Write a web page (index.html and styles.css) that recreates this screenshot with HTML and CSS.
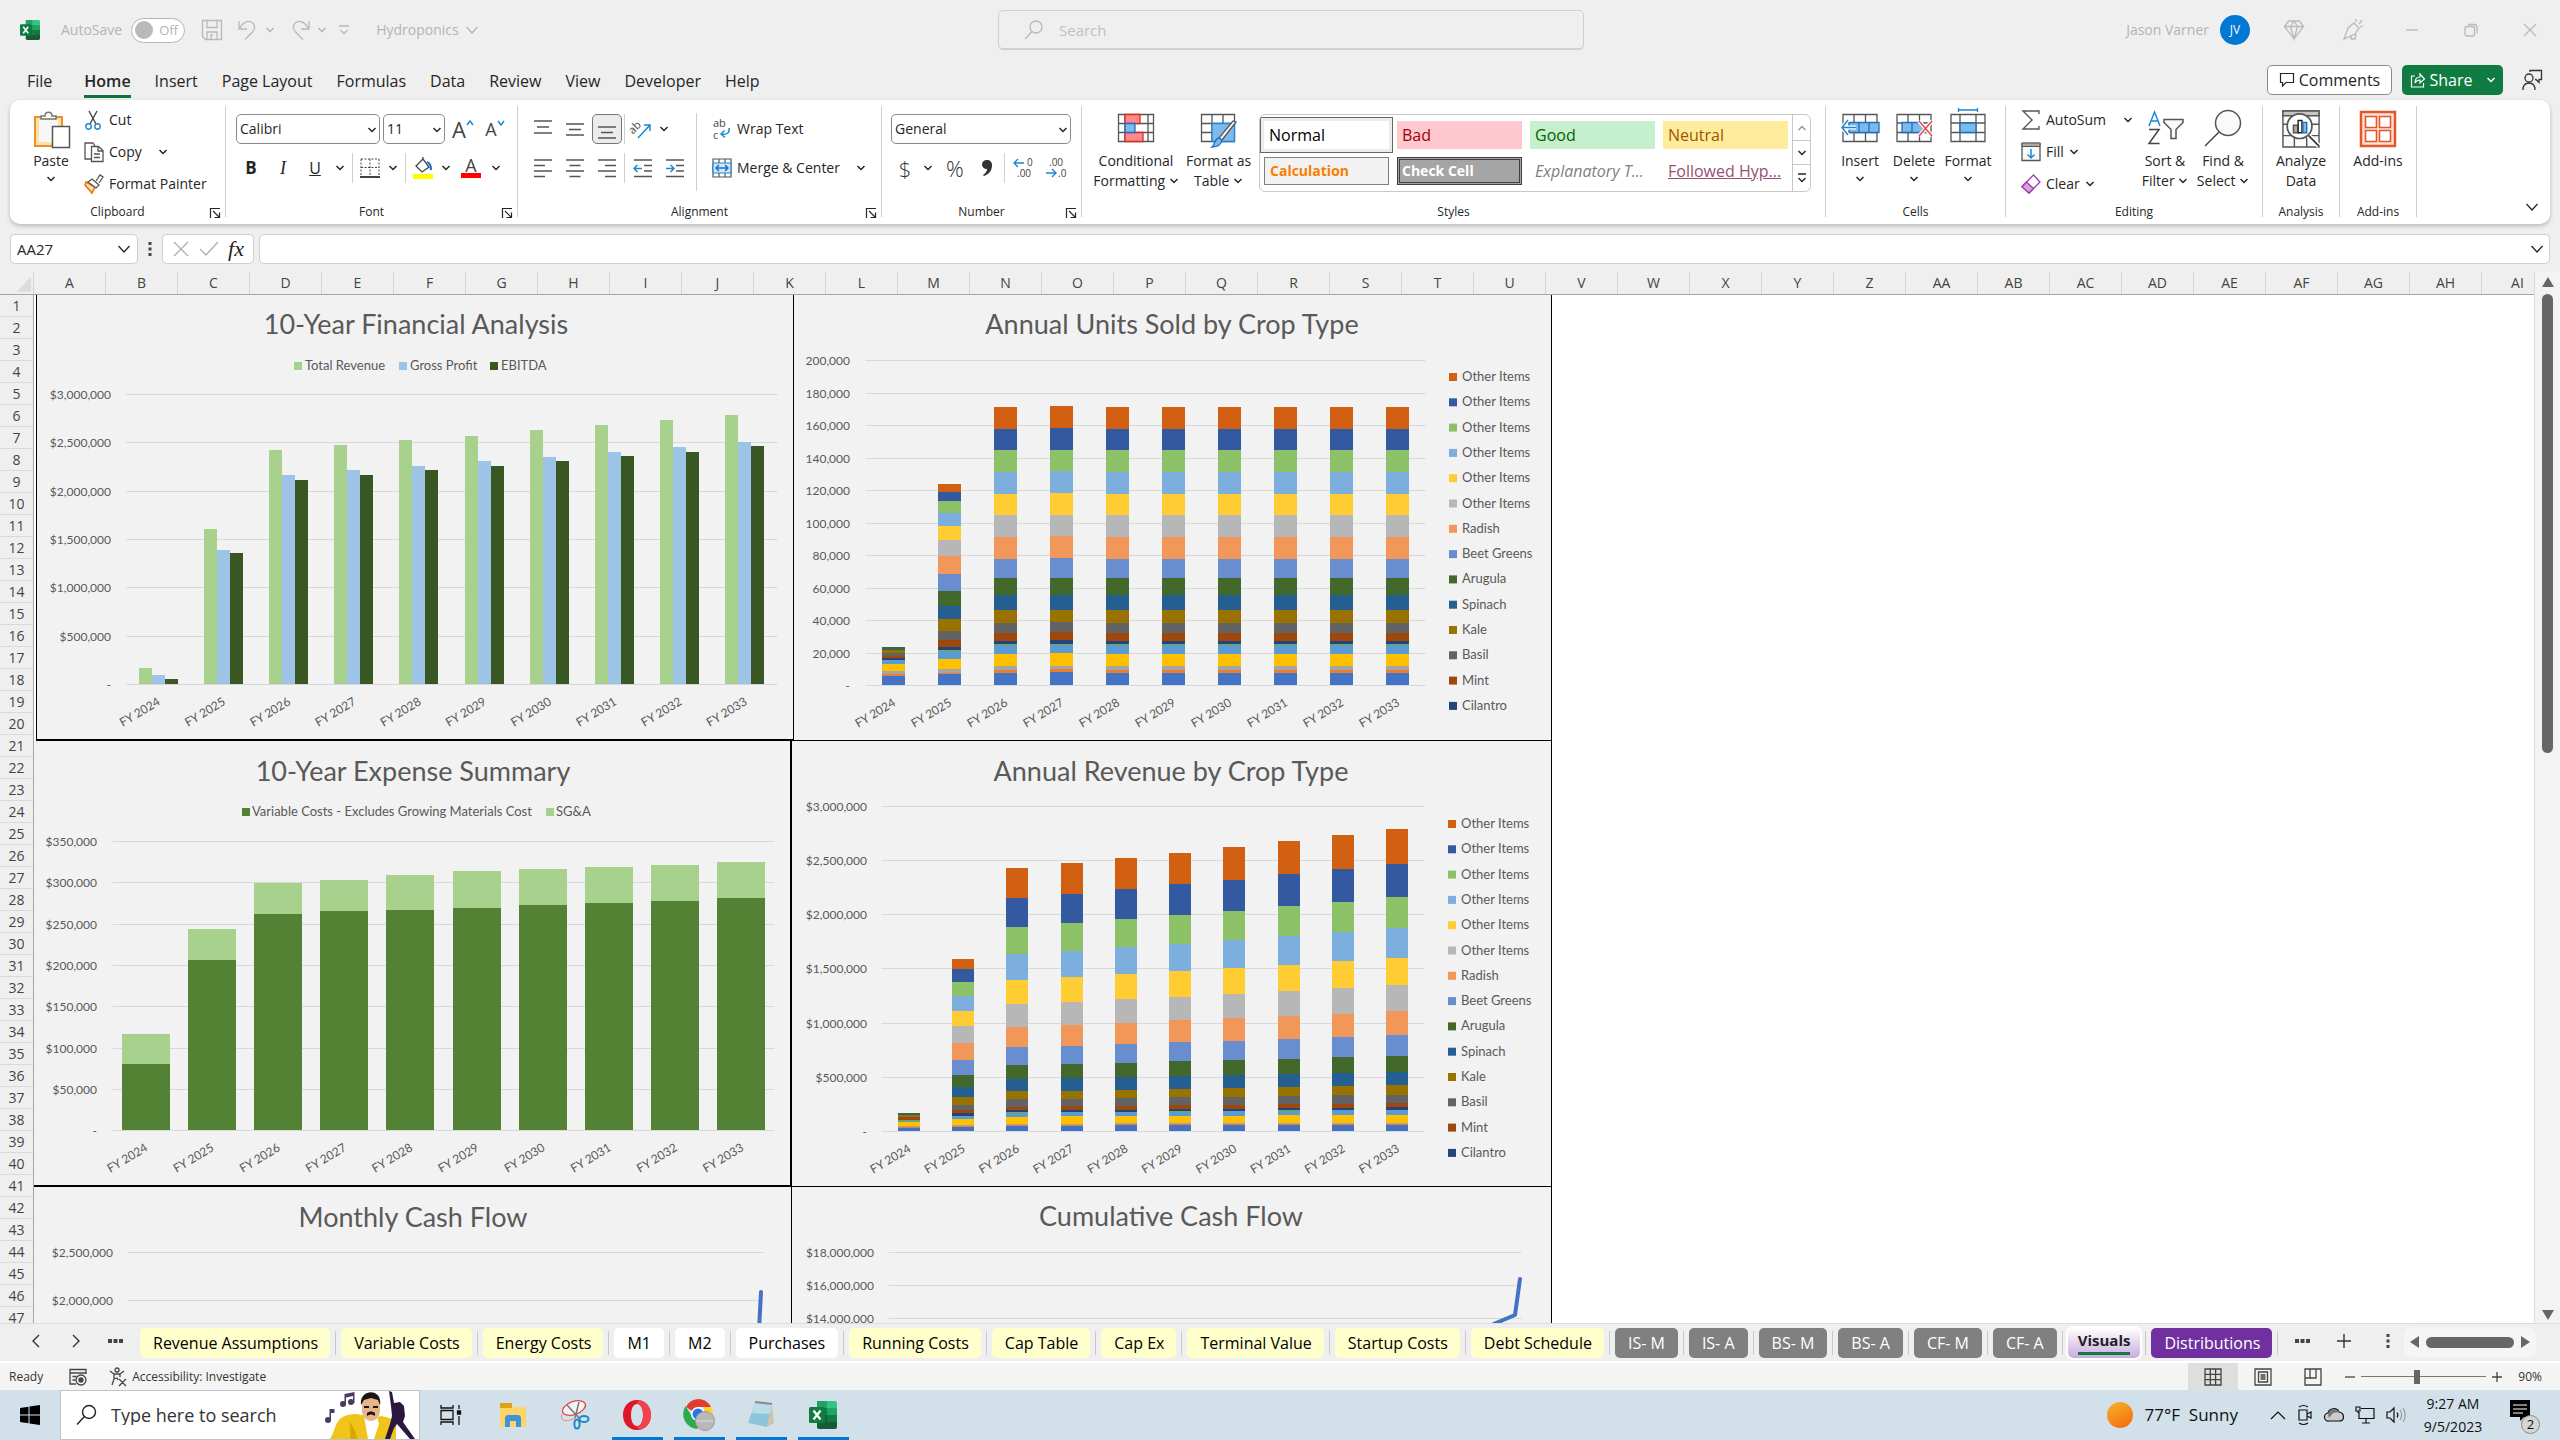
FILE: index.html
```html
<!DOCTYPE html>
<html lang="en">
<head>
<meta charset="utf-8">
<title>Hydroponics - Excel</title>
<link rel="stylesheet" href="styles.css">
</head>
<body>
<svg class="defs" aria-hidden="true">
  <symbol id="chev" viewBox="0 0 10 10"><path d="M1.5 3l3.5 3.5L8.500 3" fill="none" stroke="currentColor" stroke-width="1.500"/></symbol>
  <symbol id="chev-lg" viewBox="0 0 14 14"><path d="M1.500 4l5.500 6 5.500-6" fill="none" stroke="currentColor" stroke-width="1.300"/></symbol>
  <symbol id="launch" viewBox="0 0 12 12"><path d="M1.500 11V1.500H11M4 4l6 6M10.500 5.500v5h-5" fill="none" stroke="currentColor" stroke-width="1.200"/></symbol>
  <symbol id="excel" viewBox="0 0 28 28"><path d="M8 0h10v7H8z" fill="#21a366"/><path d="M18 0h8a2 2 0 0 1 2 2v5H18z" fill="#33c481"/><path d="M8 7h10v7H8z" fill="#107c41"/><path d="M18 7h10v7H18z" fill="#21a366"/><path d="M8 14h10v7H8z" fill="#185c37"/><path d="M18 14h10v7H18z" fill="#107c41"/><path d="M8 21h20v5a2 2 0 0 1-2 2H10a2 2 0 0 1-2-2z" fill="#185c37"/><rect y="6" width="16" height="16" rx="1.500" fill="#107c41"/><path d="M4.500 9.500l7 9M11.500 9.500l-7 9" stroke="#fff" stroke-width="2.200"/></symbol>
</svg>

<header class="titlebar">
  <svg class="app-icon" viewBox="0 0 28 28"><use href="#excel"/></svg>
  <label class="autosave">AutoSave <span class="toggle"><input type="checkbox" aria-label="AutoSave"><span>Off</span></span></label>
  <div class="quick">
    <button aria-label="Save"><svg width="22" height="22" viewBox="0 0 22 22"><path d="M1.500 1.500h19v19h-16l-3-3zM6 1.500v7h10v-7M6 20v-7h10v7M10 20v-4h2" /></svg></button>
    <button aria-label="Undo"><svg width="22" height="22" viewBox="0 0 22 22"><path d="M2 2v8h8M2.500 9.500C6 3 11 1 15 3.500c4 3 3 7 0 10L8 20.500"/></svg><svg class="c10"><use href="#chev"/></svg></button>
    <button aria-label="Redo"><svg width="22" height="22" viewBox="0 0 22 22"><path d="M20 2v8h-8M19.500 9.500C16 3 11 1 7 3.500c-4 3-3 7 0 10l7 7"/></svg><svg class="c10"><use href="#chev"/></svg></button>
    <button aria-label="Customize"><svg width="12" height="12" viewBox="0 0 12 12"><path d="M1 2h10M2.500 6L6 9.500 9.500 6"/></svg></button>
  </div>
  <button class="docname">Hydroponics <svg class="c14"><use href="#chev-lg"/></svg></button>
  <div class="search-slot">
    <label class="search"><svg width="22" height="22" viewBox="0 0 22 22"><circle cx="13" cy="8" r="6"/><path d="M9 12.500L2 20"/></svg><input type="search" placeholder="Search" aria-label="Search"></label>
  </div>
  <div class="account">
    <span>Jason Varner</span><span class="avatar">JV</span>
    <button aria-label="Premium"><svg width="22" height="22" viewBox="0 0 22 22"><path d="M5.500 2h11l4 5.500L11 20 1.500 7.500zM1.500 7.500h19M7.500 7.500L11 2l3.500 5.500L11 20z"/></svg></button>
    <button aria-label="Draw"><svg width="22" height="22" viewBox="0 0 22 22"><path d="M2 20L6 9l6-5 5 5-4 6-11 5zM9 17v3h4l1-5M14 3V0M17 5l3-4M18 8l3-1"/></svg></button>
    <button aria-label="Minimize"><svg width="14" height="14" viewBox="0 0 14 14"><path d="M1 7h12"/></svg></button>
    <button aria-label="Restore"><svg width="14" height="14" viewBox="0 0 14 14"><rect x="1" y="3.500" width="9.500" height="9.500" rx="2"/><path d="M4 1.500h6a3 3 0 0 1 3 3v6"/></svg></button>
    <button aria-label="Close"><svg width="14" height="14" viewBox="0 0 14 14"><path d="M1 1l12 12M13 1L1 13"/></svg></button>
  </div>
</header>

<nav class="menubar">
  <a href="#file">File</a><a href="#home" class="current">Home</a><a href="#insert">Insert</a><a href="#layout">Page Layout</a><a href="#formulas">Formulas</a><a href="#data">Data</a><a href="#review">Review</a><a href="#view">View</a><a href="#developer">Developer</a><a href="#help">Help</a>
  <div class="menu-actions">
    <button class="comments"><svg width="16" height="16" viewBox="0 0 16 16"><path d="M1.500 1.500h13v9H7L3.500 14v-3.500h-2z" fill="none" stroke="currentColor" stroke-width="1.200"/></svg>Comments</button>
    <button class="share"><svg width="16" height="16" viewBox="0 0 16 16"><path d="M5 4H1.500v11h12v-4M5 11c0-4 2-6 5-6V2l4.500 5L10 11V8c-2.500 0-4 1-5 3z" fill="none" stroke="currentColor" stroke-width="1.200"/></svg>Share<svg class="c10"><use href="#chev"/></svg></button>
    <button class="plain" aria-label="Catch up"><svg width="22" height="22" viewBox="0 0 22 22" fill="none" stroke="#333" stroke-width="1.300"><circle cx="8" cy="9" r="4"/><path d="M2 21c0-5 2-7 6-7s6 2 6 7M9 3V1.500h11.500v9H18v3l-3-3h-1"/></svg></button>
  </div>
</nav>

<section class="ribbon">
  <div class="group g-clip">
    <div class="body">
      <button class="big paste"><svg width="38" height="38" viewBox="0 0 38 38" fill="none" stroke-width="1.500"><path d="M3 7h27v29H3z" fill="#fce1a6" stroke="#e8912d" stroke-width="2"/><path d="M7 10h19v22H7z" fill="#f6f6f6"/><path d="M9 9V6h4c0-5 7-5 7 0h4v3z" fill="#fafafa" stroke="#777"/><path d="M20.500 16.500h17v21h-17z" fill="#fff" stroke="#555"/></svg>Paste<svg class="c10"><use href="#chev"/></svg></button>
      <div class="stack">
        <button><svg width="20" height="20" viewBox="0 0 20 20" fill="none" stroke-width="1.400"><path d="M5 1l7 13M13 1L6 14" stroke="#444"/><circle cx="4.500" cy="16.500" r="2.700" stroke="#1e88d2"/><circle cx="13.500" cy="16.500" r="2.700" stroke="#1e88d2"/></svg>Cut</button>
        <button><svg width="20" height="20" viewBox="0 0 20 20" fill="none" stroke="#555" stroke-width="1.300"><path d="M7 17H1V1h8l2 3"/><path d="M7.500 4.500h7l4.500 4v11H7.500zM14 5v4h4.500M10 12h6M10 15.500h6" fill="#fff"/></svg>Copy<svg class="c10 wide"><use href="#chev"/></svg></button>
        <button><svg width="20" height="20" viewBox="0 0 20 20" fill="none" stroke-width="1.300"><path d="M2 8l9 5-3 6-7-8z" fill="#fdd9a8" stroke="#e07b1a" stroke-width="1.600"/><path d="M8 5l7 6-3 3-8-6zM12 7l4-6 3 2-4 6" fill="#fff" stroke="#555"/></svg>Format Painter</button>
      </div>
    </div>
    <div class="foot"><span>Clipboard</span><button aria-label="Clipboard options"><svg class="c12"><use href="#launch"/></svg></button></div>
  </div>
  <i class="sep"></i>
  <div class="group g-font">
    <div class="rows">
      <div class="line">
        <span class="combo w-font"><select aria-label="Font"><option>Calibri</option></select><svg class="c10"><use href="#chev"/></svg></span>
        <span class="combo w-size"><select aria-label="Size"><option>11</option></select><svg class="c10"><use href="#chev"/></svg></span>
        <button class="w36 letter" aria-label="Grow font">A<svg class="sup" viewBox="0 0 8 8"><path d="M1 6l3-4 3 4" fill="none" stroke="#1e88d2" stroke-width="1.500"/></svg></button>
        <button class="w28 letter small" aria-label="Shrink font">A<svg class="sup" viewBox="0 0 8 8"><path d="M1 2l3 4 3-4" fill="none" stroke="#1e88d2" stroke-width="1.500"/></svg></button>
      </div>
      <div class="line">
        <button class="w32"><b>B</b></button><button class="w32"><i class="serif">I</i></button><button class="w32"><u>U</u></button><button class="w18" aria-label="Underline styles"><svg class="c10"><use href="#chev"/></svg></button>
        <i class="vs"></i>
        <button class="w28" aria-label="Borders"><svg width="20" height="20" viewBox="0 0 20 20" fill="none" stroke="#444"><path d="M1 1h18M1 1v17M19 1v17M10 1v17M1 9.500h18" stroke-dasharray="2 1.500"/><path d="M0 19h20" stroke-width="2"/></svg></button><button class="w18" aria-label="Border styles"><svg class="c10"><use href="#chev"/></svg></button>
        <i class="vs"></i>
        <button class="w28" aria-label="Fill colour"><svg width="20" height="22" viewBox="0 0 20 22"><path d="M3 9l7-7 6 8-7 5zM10 2V0" fill="#fff" stroke="#444" stroke-width="1.300"/><path d="M14 5c3 1 4 3 4 8" fill="none" stroke="#1e6fbf" stroke-width="2"/><path d="M0 17h20v5H0z" fill="#ff0"/></svg></button><button class="w18" aria-label="Fill colours"><svg class="c10"><use href="#chev"/></svg></button>
        <button class="w32 fcolor" aria-label="Font colour">A</button><button class="w18" aria-label="Font colours"><svg class="c10"><use href="#chev"/></svg></button>
      </div>
    </div>
    <div class="foot"><span>Font</span><button aria-label="Font options"><svg class="c12"><use href="#launch"/></svg></button></div>
  </div>
  <i class="sep"></i>
  <div class="group g-align">
    <div class="body">
      <div class="rows">
        <div class="line">
          <button class="w32" aria-label="Top align"><svg class="ln" viewBox="0 0 18 22"><path d="M0 3h18M3 9h12M0 15h18"/></svg></button>
          <button class="w32" aria-label="Middle align"><svg class="ln" viewBox="0 0 18 22"><path d="M0 6h18M3 11.500h12M0 17h18"/></svg></button>
          <button class="w32 on" aria-label="Bottom align"><svg class="ln" viewBox="0 0 18 22"><path d="M0 9h18M3 14.500h12M0 20h18"/></svg></button>
          <i class="vs"></i>
          <button class="w28" aria-label="Orientation"><svg width="22" height="22" viewBox="0 0 22 22"><text x="0" y="12" class="ab" transform="rotate(-45 7 11)">ab</text><path d="M8 20L20 7M14 7h6v6" fill="none" stroke="#1e88d2" stroke-width="1.500"/></svg></button><button class="w18" aria-label="Orientations"><svg class="c10"><use href="#chev"/></svg></button>
        </div>
        <div class="line">
          <button class="w32" aria-label="Left"><svg class="ln" viewBox="0 0 18 22"><path d="M0 3h18M0 8.500h11M0 14h18M0 19.500h11"/></svg></button>
          <button class="w32" aria-label="Centre"><svg class="ln" viewBox="0 0 18 22"><path d="M0 3h18M3.500 8.500h11M0 14h18M3.500 19.500h11"/></svg></button>
          <button class="w32" aria-label="Right"><svg class="ln" viewBox="0 0 18 22"><path d="M0 3h18M7 8.500h11M0 14h18M7 19.500h11"/></svg></button>
          <i class="vs"></i>
          <button class="w32" aria-label="Outdent"><svg class="ln" viewBox="0 0 18 22"><path d="M0 3h18M10 8.500h8M10 14h8M0 19.500h18"/><path class="bl" d="M8 11.500H0M3.500 8L0 11.500 3.500 15"/></svg></button>
          <button class="w32" aria-label="Indent"><svg class="ln" viewBox="0 0 18 22"><path d="M0 3h18M10 8.500h8M10 14h8M0 19.500h18"/><path class="bl" d="M0 11.500h8M4.500 8L8 11.500 4.500 15"/></svg></button>
        </div>
      </div>
      <i class="vs tall"></i>
      <div class="rows">
        <button class="line txt"><svg width="20" height="22" viewBox="0 0 20 22"><text x="1" y="9" class="ab">ab</text><text x="1" y="21" class="ab">c</text><path d="M17 10c1 5-2 7-8 6M12.500 12.500L9 16l4 3.500" fill="none" stroke="#1e88d2" stroke-width="1.500"/></svg>Wrap Text</button>
        <button class="line txt"><svg width="20" height="20" viewBox="0 0 20 20" fill="none" stroke="#555" stroke-width="1.200"><path d="M1 1h18v18H1zM7 1v4M13 1v4M7 15v4M13 15v4"/><path d="M1 5h18v10H1z" fill="#cfe6f8" stroke="#1e88d2"/><path d="M4 10h12M7 7l-3 3 3 3M13 7l3 3-3 3" stroke="#1e6fbf" stroke-width="1.500"/></svg>Merge &amp; Center<svg class="c10 wide"><use href="#chev"/></svg></button>
      </div>
    </div>
    <div class="foot"><span>Alignment</span><button aria-label="Alignment options"><svg class="c12"><use href="#launch"/></svg></button></div>
  </div>
  <i class="sep"></i>
  <div class="group g-num">
    <div class="rows">
      <div class="line"><span class="combo w-num"><select aria-label="Number format"><option>General</option></select><svg class="c10"><use href="#chev"/></svg></span></div>
      <div class="line">
        <button class="w28 sym">$</button><button class="w18" aria-label="Currencies"><svg class="c10"><use href="#chev"/></svg></button><button class="w36 sym">%</button><button class="w28" aria-label="Comma"><svg width="10" height="20" viewBox="0 0 10 20"><path d="M5 2c3 0 5 2 5 5 0 6-3 9-8 11l-1-1c3-2 4-4 4-6-3 0-5-2-5-4.500S2 2 5 2z" fill="#333"/></svg></button>
        <i class="vs"></i>
        <button class="w32" aria-label="Increase decimal"><svg width="22" height="22" viewBox="0 0 22 22"><text x="14" y="9" class="dec">0</text><text x="4" y="20" class="dec">.00</text><path d="M11 6H1M5 2L1 6l4 4" fill="none" stroke="#1e88d2" stroke-width="1.400"/></svg></button>
        <button class="w32" aria-label="Decrease decimal"><svg width="22" height="22" viewBox="0 0 22 22"><text x="4" y="9" class="dec">.00</text><text x="13" y="20" class="dec">.0</text><path d="M1 16h10M7 12l4 4-4 4" fill="none" stroke="#1e88d2" stroke-width="1.400"/></svg></button>
      </div>
    </div>
    <div class="foot"><span>Number</span><button aria-label="Number options"><svg class="c12"><use href="#launch"/></svg></button></div>
  </div>
  <i class="sep"></i>
  <div class="group g-styles">
    <div class="body">
      <button class="big w84"><svg width="38" height="38" viewBox="0 0 38 38" fill="none" stroke="#555" stroke-width="1.300"><path d="M1.500 4.500h35v27h-35zM1.500 13.500h35M1.500 22.500h35M8 4.500v27M31 4.500v27"/><path d="M8 4.500h15v9H8zM8 22.500h18v9H8z" fill="#ff8a8a" stroke="#d92b2b"/><path d="M8 13.500h10v9H8z" fill="#7fb9ea" stroke="#1e6fbf"/></svg><span>Conditional</span><span>Formatting <svg class="c10"><use href="#chev"/></svg></span></button>
      <button class="big w81"><svg width="38" height="38" viewBox="0 0 38 38" fill="none" stroke="#555" stroke-width="1.300"><path d="M1.500 4.500h33v27h-33zM1.500 13.500h33M1.500 22.500h33M12 4.500v27M23 4.500v27"/><path d="M12 13.500h22.500v18H12z" fill="#7fb9ea" stroke="#1e88d2"/><path d="M36 12L22 30l-3-2 14-17z" fill="#fff"/><path d="M22 30c-1 6-5 7-10 7 3-2 2-8 7-9z" fill="#7fb9ea" stroke="#1e6fbf"/></svg><span>Format as</span><span>Table <svg class="c10"><use href="#chev"/></svg></span></button>
      <div class="gallery">
        <div class="cells">
          <button class="st-normal">Normal</button><button class="st-bad">Bad</button><button class="st-good">Good</button><button class="st-neutral">Neutral</button>
          <button class="st-calc">Calculation</button><button class="st-check">Check Cell</button><button class="st-expl">Explanatory T...</button><button class="st-link">Followed Hyp...</button>
        </div>
        <div class="gscroll">
          <button class="dim" aria-label="Up"><svg class="c10 flip"><use href="#chev"/></svg></button><button aria-label="Down"><svg class="c10"><use href="#chev"/></svg></button><button aria-label="More"><svg width="10" height="10" viewBox="0 0 10 10"><path d="M1 1h8M1.500 5L5 8.500 8.500 5" fill="none" stroke="currentColor" stroke-width="1.400"/></svg></button>
        </div>
      </div>
    </div>
    <div class="foot"><span>Styles</span></div>
  </div>
  <i class="sep"></i>
  <div class="group g-cells">
    <div class="body">
      <button class="big w54"><svg width="38" height="38" viewBox="0 0 38 38" fill="none" stroke="#555" stroke-width="1.300"><path d="M2 4.500h34v27H2zM2 13h34M2 22.500h34M13 4.500v27M24.500 4.500v27"/><path d="M8 12.500h30v10H8z" fill="#7fb9ea" stroke="#1e6fbf"/><path d="M18 12.500v10M28 12.500v10" stroke="#1e6fbf"/><path d="M15 17.500H1M7 10L1 17.500 7 25" stroke="#fff" stroke-width="4"/><path d="M15 17.500H1M7 10L1 17.500 7 25" stroke="#1e88d2" stroke-width="1.500"/></svg>Insert<svg class="c10"><use href="#chev"/></svg></button>
      <button class="big w54"><svg width="38" height="38" viewBox="0 0 38 38" fill="none" stroke="#555" stroke-width="1.300"><path d="M2 4.500h34v27H2zM2 13h34M2 22.500h34M13 4.500v27M24.500 4.500v27"/><path d="M7 12.500h19l3 5-3 5H7z" fill="#7fb9ea" stroke="#1e6fbf"/><path d="M17 12.500v10" stroke="#1e6fbf"/><path d="M24 11l13 15M37 11L24 26" stroke="#fff" stroke-width="4"/><path d="M24 11l13 15M37 11L24 26" stroke="#e8484a" stroke-width="1.500"/></svg>Delete<svg class="c10"><use href="#chev"/></svg></button>
      <button class="big w54"><svg width="38" height="38" viewBox="0 0 38 38" fill="none" stroke="#555" stroke-width="1.300"><path d="M2 4.500h34v27H2zM2 13h34M2 22.500h34M11 4.500v27M27 4.500v27"/><path d="M11 13h16v9.500H11z" fill="#7fb9ea" stroke="#1e6fbf"/><path d="M9.500 0h19M9.500-2v4M28.500-2v4" stroke="#1e88d2"/></svg>Format<svg class="c10"><use href="#chev"/></svg></button>
    </div>
    <div class="foot"><span>Cells</span></div>
  </div>
  <i class="sep"></i>
  <div class="group g-edit">
    <div class="body">
      <div class="stack">
        <button><svg width="20" height="20" viewBox="0 0 20 20"><path d="M18 4V1H2l9 9-9 9h16v-3" fill="none" stroke="#555" stroke-width="1.400"/></svg>AutoSum<svg class="c10 wide"><use href="#chev"/></svg></button>
        <button><svg width="20" height="20" viewBox="0 0 20 20" fill="none"><path d="M1 1.500h18v17H1z" fill="#fafafa" stroke="#555" stroke-width="1.300"/><path d="M1 1h18v3.500H1z" fill="#aaa" stroke="#555"/><path d="M10 7v9M6.500 12.500L10 16l3.500-3.500" stroke="#1e88d2" stroke-width="1.500"/></svg>Fill<svg class="c10"><use href="#chev"/></svg></button>
        <button><svg width="20" height="20" viewBox="0 0 20 20" stroke="#9a3fa8" stroke-width="1.300"><path d="M12.500 1l6.500 7-11 11-7-6.500z" fill="#fff"/><path d="M5.500 8l7 6.500L8 19l-7-6z" fill="#d9a0e0"/></svg>Clear<svg class="c10"><use href="#chev"/></svg></button>
      </div>
      <button class="big w60"><svg width="38" height="38" viewBox="0 0 38 38"><path d="M3 16L8.500 2 14 16M5 11h7" fill="none" stroke="#1e88d2" stroke-width="1.500"/><path d="M3 19.500h10L3 33.500h10.500" fill="none" stroke="#444" stroke-width="1.500"/><path d="M18 9.500h19v3l-7 7v9h-5v-9l-7-7z" fill="#fafafa" stroke="#555" stroke-width="1.500"/></svg><span>Sort &amp;</span><span>Filter <svg class="c10"><use href="#chev"/></svg></span></button>
      <button class="big w60"><svg width="38" height="38" viewBox="0 0 38 38"><circle cx="24" cy="13" r="12.500" fill="#fafafa" stroke="#555" stroke-width="1.500"/><path d="M15 22L1 36" stroke="#444" stroke-width="1.500"/></svg><span>Find &amp;</span><span>Select <svg class="c10"><use href="#chev"/></svg></span></button>
    </div>
    <div class="foot"><span>Editing</span></div>
  </div>
  <i class="sep"></i>
  <div class="group g-one">
    <div class="body">
      <button class="big w76"><svg width="40" height="40" viewBox="0 0 40 40" fill="none" stroke="#555" stroke-width="1.500"><path d="M1 1h38v38H1zM1 15h38M1 27h38M13 27v12M26 27v12" fill="#fafafa"/><path d="M1 1h38v5H1z" fill="#c4c4c4"/><circle cx="18.500" cy="17" r="13" fill="#fff" stroke-width="1.800"/><path d="M12 16h5v8h-5z" fill="#aaa"/><path d="M17 11h4v13h-4z" fill="#fff" stroke="#222"/><path d="M22 13h4v11h-4z" fill="#7fb9ea" stroke="#1e6fbf"/><path d="M28 27l11 11" stroke="#fff" stroke-width="5"/><path d="M28 27l11 11" stroke="#333" stroke-width="1.800"/></svg><span>Analyze</span><span>Data</span></button>
    </div>
    <div class="foot"><span>Analysis</span></div>
  </div>
  <i class="sep"></i>
  <div class="group g-one">
    <div class="body">
      <button class="big w76"><svg width="38" height="38" viewBox="0 0 38 38" fill="#fff" stroke="#e5572a" stroke-width="1.600"><path d="M2 2h34v34H2z" fill="#fbe3da" stroke-width="2.500"/><path d="M6.500 6.500h11v11h-11zM20.500 6.500h11v11h-11zM6.500 20.500h11v11h-11zM20.500 20.500h11v11h-11z"/></svg><span>Add-ins</span></button>
    </div>
    <div class="foot"><span>Add-ins</span></div>
  </div>
  <i class="sep"></i>
  <button class="collapse" aria-label="Collapse ribbon"><svg class="c14"><use href="#chev-lg"/></svg></button>
</section>

<section class="formula">
  <div class="namebox"><input type="text" value="AA27" aria-label="Name box"><svg class="c14"><use href="#chev-lg"/></svg></div>
  <svg width="4" height="14" viewBox="0 0 4 14"><path d="M.5 0h3v3h-3zM.5 5.500h3v3h-3zM.5 11h3v3h-3z" fill="#444"/></svg>
  <div class="fx"><button aria-label="Cancel"><svg width="18" height="18" viewBox="0 0 18 18"><path d="M2 2l14 14M16 2L2 16"/></svg></button><button aria-label="Enter"><svg width="20" height="18" viewBox="0 0 20 18"><path d="M1 9l6 6L19 2"/></svg></button><button class="fn">fx</button></div>
  <div class="fbox"><input type="text" aria-label="Formula bar"><svg class="c14"><use href="#chev-lg"/></svg></div>
</section>

<main class="sheet">
  <div class="grid">
    <div class="colheads" id="cols"><span class="corner"></span></div>
    <div class="area">
      <div class="rowheads" id="rows"></div>
      <div class="canvas">
        <div class="charts">
          <figure class="c1" id="chart-financial"></figure>
          <figure class="c2" id="chart-units"></figure>
          <figure class="c3" id="chart-expense"></figure>
          <figure class="c4" id="chart-revenue"></figure>
          <figure class="c5" id="chart-monthly"></figure>
          <figure class="c6" id="chart-cumulative"></figure>
        </div>
      </div>
    </div>
  </div>
  <div class="vscroll"><svg width="12" height="10" viewBox="0 0 12 10"><path d="M6 0l6 10H0z" fill="#666"/></svg><span class="vthumb"></span><svg width="12" height="10" viewBox="0 0 12 10"><path d="M0 0h12L6 10z" fill="#666"/></svg></div>
</main>

<nav class="sheetbar">
  <div class="arrows"><button aria-label="Previous"><svg width="8" height="14" viewBox="0 0 8 14"><path d="M7 1L1 7l6 6"/></svg></button><button aria-label="Next"><svg width="8" height="14" viewBox="0 0 8 14"><path d="M1 1l6 6-6 6"/></svg></button><button aria-label="More sheets"><svg width="16" height="6" viewBox="0 0 16 6"><path class="dot" d="M1 1h4v4H1zM6.500 1h4v4h-4zM12 1h4v4h-4z"/></svg></button></div>
  <ul class="tabs" id="tabs"></ul>
  <div class="tabtools"><button aria-label="More tabs"><svg width="16" height="6" viewBox="0 0 16 6"><path class="dot" d="M1 1h4v4H1zM6.500 1h4v4h-4zM12 1h4v4h-4z"/></svg></button><button aria-label="New sheet"><svg width="16" height="16" viewBox="0 0 16 16"><path d="M8 1v14M1 8h14"/></svg></button><svg width="4" height="14" viewBox="0 0 4 14"><path class="dot" d="M.5 0h3v3h-3zM.5 5.500h3v3h-3zM.5 11h3v3h-3z"/></svg></div>
  <div class="hscroll"><svg width="9" height="12" viewBox="0 0 9 12"><path d="M9 0v12L0 6z" fill="#666"/></svg><span></span><svg width="9" height="12" viewBox="0 0 9 12"><path d="M0 0v12l9-6z" fill="#666"/></svg></div>
</nav>

<footer class="status">
  <span>Ready</span>
  <svg width="18" height="18" viewBox="0 0 18 18" fill="none" stroke="#444" stroke-width="1.300"><path d="M7 16H1V1.500h16V6M1 5h16M3.500 8.500h4M3.500 12h3"/><circle cx="12" cy="12" r="5"/><circle cx="12" cy="12" r="2" fill="#444"/></svg>
  <button class="access"><svg width="18" height="20" viewBox="0 0 18 20" fill="none" stroke="#444" stroke-width="1.300"><circle cx="8" cy="3" r="2"/><path d="M1 4l4 3v5l-2 6M15 4l-4 3v3M5 7h6M5 12l3-1 1 2M10 12l7 7M17 12l-7 7"/></svg>Accessibility: Investigate</button>
  <div class="views">
    <button class="on" aria-label="Normal"><svg width="18" height="18" viewBox="0 0 18 18"><path d="M1 1h16v16H1zM1 6.300h16M1 11.600h16M6.300 1v16M11.600 1v16"/></svg></button>
    <button aria-label="Page layout"><svg width="18" height="18" viewBox="0 0 18 18"><path d="M1 1h16v16H1zM4.500 4h9v10h-9zM6.500 7h5M6.500 9h5M6.500 11h5"/></svg></button>
    <button aria-label="Page break"><svg width="18" height="18" viewBox="0 0 18 18"><path d="M1 1h16v16H1zM1 10h11V1M6 1v9"/></svg></button>
  </div>
  <div class="zoom"><button aria-label="Zoom out"><svg width="10" height="10" viewBox="0 0 10 10"><path d="M0 5h10"/></svg></button><input type="range" min="0" max="100" value="44" aria-label="Zoom"><button aria-label="Zoom in"><svg width="10" height="10" viewBox="0 0 10 10"><path d="M0 5h10M5 0v10"/></svg></button></div>
  <span class="pct">90%</span>
</footer>

<footer class="taskbar">
  <button class="start" aria-label="Start"><svg width="20" height="20" viewBox="0 0 20 20"><path d="M0 3l8.500-1.200V9.500H0zM9.500 1.600L20 0v9.500H9.500zM0 10.500h8.500v7.700L0 17zM9.500 10.500H20V20L9.500 18.400z"/></svg></button>
  <label class="tsearch"><svg width="22" height="22" viewBox="0 0 22 22"><circle cx="14" cy="8" r="6.500"/><path d="M9.500 12.500L2 20.500"/></svg><input type="search" placeholder="Type here to search" aria-label="Type here to search">
    <svg class="singer" width="94" height="48" viewBox="0 0 94 48" stroke="none"><g fill="#4a3c5e"><circle cx="3" cy="29" r="3"/><path d="M4.500 18h5v4H6v8H4.500z"/><circle cx="18" cy="13" r="3"/><circle cx="26" cy="11" r="3"/><path d="M19.500 3l10-2v11H28V5l-7 1.500V13h-1.500z"/></g><path d="M5 48c4-6 5-16 11-21 6-4 15-5 21-3l8 5 11-4c6 1 12 3 15 6v17z" fill="#f0c419"/><path d="M39 25h13l2 8-5 15h-6z" fill="#fff"/><path d="M24 30c4 5 8 12 8 18h-7c1-7 0-12-1-18z" fill="#d9a800"/><path d="M37 10c0-8 18-8 18 0v10c0 6-5 10-9 10s-9-4-9-10z" fill="#e8b48a"/><path d="M36 14C34-3 58-3 55 14l-2-5-7-2-7 2z" fill="#1b1516"/><path d="M42 22c3-2 5-2 8 0v3c-3-2-5-2-8 0zM39 15h5v2h-5zM48 15h5v2h-5z" fill="#1b1516"/><path d="M64 0l3 1 2 11 6-1 4 4 1 10-2 6 12 17h-5l-13-15-3 4-4 11h-5l5-15 2-8-1-10z" fill="#2b1740"/></svg></label>
  <ul class="apps">
    <li><button aria-label="Task view"><svg width="22" height="20" viewBox="0 0 22 20" fill="none" stroke="#111" stroke-width="1.300"><path d="M1 0v3h12V0M1 20v-3h12v3M1 5.500h12v9H1zM19 0v4M19 11v9"/><path d="M17.500 6h3v3h-3z" fill="#111"/></svg></button></li>
    <li><button aria-label="Explorer"><svg width="28" height="26" viewBox="0 0 28 26"><path d="M1 2h11l3 3h12v20H1z" fill="#ffd763"/><path d="M1 1h12v5H1z" fill="#e0a315"/><path d="M1 6h26v18H1z" fill="#fdd465"/><path d="M6 25V15l2-2h12l2 2v10h-5v-6h-6v6z" fill="#3f95dd"/></svg></button></li>
    <li><button aria-label="Snip"><svg width="30" height="30" viewBox="0 0 30 30" fill="none"><ellipse cx="14" cy="8" rx="12" ry="6.500" transform="rotate(-20 14 8)" fill="#f4f4f4" stroke="#e0474a" stroke-width="1.300"/><path d="M2 14c-3 8 6 8 13 4" stroke="#e88" stroke-width="1"/><path d="M7 5l12 13M19 2l-4 16" stroke="#777" stroke-width="1.500"/><ellipse cx="17" cy="24" rx="2.600" ry="4.500" stroke="#1e88d2" stroke-width="2"/><ellipse cx="24" cy="19" rx="4.500" ry="3" stroke="#1e88d2" stroke-width="2"/></svg></button></li>
    <li class="run"><button aria-label="Opera"><svg width="30" height="30" viewBox="0 0 30 30"><path fill-rule="evenodd" d="M15 0c9 0 14 7 14 15s-5 15-14 15S1 23 1 15 6 0 15 0zm0 4c-4 0-6 5-6 11s2 11 6 11 6-5 6-11-2-11-6-11z" fill="#e01626"/><path d="M20 1c6 3 9 8 9 14s-3 11-9 14c-2 1-5 0-5-3 4 0 6-5 6-11S19 4 15 4c0-3 3-4 5-3z" fill="#f2434c"/></svg></button></li>
    <li class="run"><button aria-label="Chrome"><svg width="32" height="32" viewBox="0 0 32 32"><path d="M15 0a15 15 0 0 1 13 8H15l-6 4-6-4A15 15 0 0 1 15 0z" fill="#e33b2e"/><path d="M2.500 7A15 15 0 0 0 14 30l6-10-10-1z" fill="#2da94f"/><path d="M28 8a15 15 0 0 1-14 22l7-12V8z" fill="#fdd231"/><circle cx="15" cy="15" r="7" fill="#fff"/><circle cx="15" cy="15" r="5.500" fill="#2676ea"/><circle cx="22" cy="22" r="9.500" fill="#b9b9b9" stroke="#999"/><path d="M13 22h18" stroke="#ddd"/></svg></button></li>
    <li class="run"><button aria-label="Notepad"><svg width="28" height="28" viewBox="0 0 28 28"><path d="M8 2l17 2-5 22-19-4z" fill="#8cc5da"/><path d="M8 2l17 2-2 9-18-1z" fill="#b9dde8"/><path d="M25 4l2 18-7 4z" fill="#cfc4a8"/><path d="M8 1l17 2" stroke="#888" stroke-width="2"/></svg></button></li>
    <li class="run"><button aria-label="Excel"><svg width="28" height="28" viewBox="0 0 28 28"><use href="#excel"/></svg></button></li>
  </ul>
  <div class="tray">
    <button class="weather"><span class="sun"></span>77°F&nbsp; Sunny</button>
    <button aria-label="Hidden icons"><svg width="16" height="10" viewBox="0 0 16 10"><path d="M1 9l7-7 7 7"/></svg></button>
    <button aria-label="Meet"><svg width="16" height="20" viewBox="0 0 16 20"><path d="M2 5h8v10H2zM10 9l4-2v6l-4-2M2 2c3-2 6-2 9 0M2 18c3 2 6 2 9 0"/></svg></button>
    <button aria-label="OneDrive"><svg width="20" height="14" viewBox="0 0 20 14"><path d="M5 13a4 4 0 0 1-1-8c1-5 9-6 11-1 6 1 6 9 0 9z" fill="#ccc"/><path d="M4 6c2-6 9-6 11-2l-6 1-4 5z" fill="#777" stroke="none"/></svg></button>
    <button aria-label="Network"><svg width="20" height="18" viewBox="0 0 20 18"><path d="M6 2.500h13v10H4V6M11 12.500V17M7 17h8M1 1h4v4H1zM3 5v2"/></svg></button>
    <button aria-label="Volume"><svg width="20" height="16" viewBox="0 0 20 16"><path d="M1 5h3l4-4v14l-4-4H1zM11 5.500c1 1.500 1 3.500 0 5"/><path d="M14 3c2 3 2 7 0 10M17 1c3 4 3 10 0 14" stroke="#999"/></svg></button>
    <div class="clock"><span>9:27 AM</span><span>9/5/2023</span></div>
    <button class="notif" aria-label="Notifications"><svg width="20" height="22" viewBox="0 0 20 22"><path d="M0 0h20v17h-6l-4 4v-4H0z" fill="#000" stroke="none"/><path d="M3 5h14M3 9h14M3 13h10" stroke="#fff"/></svg><span>2</span></button>
  </div>
</footer>
<script src="app.js"></script>
</body>
</html>
```
FILE: styles.css
```css
* { box-sizing: border-box; }
html, body { height: 100%; }
body { margin: 0; display: flex; flex-direction: column; background: #efefef; color: #262626; font: 14px/20px "Open Sans", "Noto Sans", sans-serif; overflow: hidden; }
button, input, select { font: inherit; color: inherit; background: none; border: 0; padding: 0; margin: 0; outline: none; }
button { display: flex; align-items: center; justify-content: center; white-space: nowrap; }
ul { list-style: none; margin: 0; padding: 0; }
a { color: inherit; text-decoration: none; }
svg { flex: none; overflow: visible; }
.defs { display: none; }
.c10 { width: 10px; height: 10px; }
.c12 { width: 12px; height: 12px; }
.c14 { width: 14px; height: 14px; }

/* title bar */
.titlebar { flex: none; height: 60px; display: flex; align-items: center; padding: 0 19px 0 20px; color: #b4b4b4; position: relative; }
.titlebar svg { fill: none; stroke: #b9b9b9; stroke-width: 1.3; }
.titlebar .app-icon { width: 20px; height: 20px; stroke: none; }
.autosave { display: flex; align-items: center; gap: 9px; margin-left: 21px; }
.toggle { display: flex; align-items: center; width: 54px; height: 25px; border: 1px solid #b4b4b4; border-radius: 13px; background: #fff; padding-left: 3px; gap: 6px; font-size: 13px; }
.toggle input { appearance: none; width: 18px; height: 18px; border-radius: 9px; background: #b9b9b9; }
.quick { display: flex; align-items: center; gap: 14px; margin-left: 16px; }
.quick button { gap: 6px; }
.quick button:last-child { margin-left: -3px; }
.docname { margin-left: 26px; gap: 6px; }
.search-slot { position: absolute; left: 0; right: 0; display: flex; justify-content: center; pointer-events: none; padding-left: 22px; }
.search { width: 586px; height: 40px; border: 1px solid #d0d0d0; border-bottom-width: 2px; border-radius: 5px; display: flex; align-items: center; gap: 14px; padding-left: 24px; font-size: 15px; }
.search input::placeholder { color: #c0c0c0; opacity: 1; }
.account { margin-left: auto; display: flex; align-items: center; }
.avatar { width: 30px; height: 30px; border-radius: 15px; background: #0078d4; color: #fff; font-size: 12px; line-height: 30px; text-align: center; margin-left: 11px; }
.account button { width: 22px; margin-left: 37px; }
.account .avatar + button { margin-left: 33px; }

/* ribbon tabs */
.menubar { flex: none; height: 40px; display: flex; align-items: center; padding: 0 17px 0 27px; gap: 24px; font-size: 16px; }
.menubar a { height: 36px; line-height: 39px; }
.menubar a:first-child { margin-right: 8px; }
.menubar .current { font-weight: 600; border-bottom: 3px solid #0f7040; }
.menu-actions { margin-left: auto; display: flex; align-items: center; gap: 10px; }
.comments, .share { height: 30px; border-radius: 5px; gap: 4px; }
.comments { width: 125px; border: 1px solid #8a8a8a; background: #fff; }
.share { width: 101px; background: #107c41; color: #fff; }
.share .c10 { margin-left: 9px; }
.plain { margin-left: 8px; }

/* ribbon */
.ribbon { flex: none; height: 124px; margin: 0 10px; background: #fff; border-radius: 10px; box-shadow: 0 2px 4px #0000003a; display: flex; }
.sep { width: 1px; background: #cfcfcf; margin: 6px 0 7px; flex: none; }
.group { display: flex; flex-direction: column; padding-top: 4px; }
.group .body { display: flex; height: 100px; }
.foot { height: 16px; line-height: 16px; font-size: 12px; display: flex; align-items: center; }
.foot span { flex: 1; text-align: center; }
.foot button { width: 12px; margin: 2px 4px 0 -16px; }
.g-clip { width: 215px; } .g-font { width: 291px; } .g-align { width: 363px; } .g-num { width: 199px; }
.g-styles { width: 743px; } .g-cells { width: 179px; } .g-edit { width: 256px; } .g-one { width: 76px; }
.big { flex-direction: column; justify-content: flex-start; padding-top: 6px; }
.big > svg:first-child { height: 38px; margin-bottom: 3px; }
.paste { width: 66px; margin-left: 8px; }
.w84 { width: 84px; margin-left: 12px; } .w81 { width: 81px; } .w54 { width: 54px; } .w60 { width: 58px; } .w76 { width: 76px; }
.big > .c10 { margin-top: 3px; }
.stack { display: flex; flex-direction: column; }
.stack button { height: 32px; justify-content: flex-start; gap: 5px; }
.stack .wide { margin-left: 11px; }
.rows { display: flex; flex-direction: column; height: 100px; padding-top: 10px; }
.line { height: 30px; display: flex; align-items: center; }
.line + .line { margin-top: 9px; }
.g-font .rows, .g-align .rows:first-child { padding-left: 9px; }
.g-num .rows { padding-left: 9px; }
.combo { position: relative; height: 30px; border: 1px solid #8a8a8a; border-radius: 5px; display: flex; }
.combo select { appearance: none; flex: 1; padding-left: 3px; }
.combo svg { position: absolute; right: 2px; top: 10px; }
.w-font { width: 144px; margin: 0 3px 0 1px; } .w-size { width: 62px; } .w-num { width: 180px; }
.w18 { width: 18px; } .w28 { width: 28px; } .w32 { width: 32px; } .w36 { width: 36px; }
.line button { height: 30px; }
.line b { font-size: 17px; } .line u { font-size: 16px; } .serif { font: italic 18px/20px "Liberation Serif", serif; }
.letter { font-size: 22px; color: #444; } .letter.small { font-size: 18px; }
.sup { width: 8px; height: 8px; align-self: flex-start; margin-top: 5px; }
.vs { width: 1px; height: 30px; background: #cfcfcf; margin: 0 3px; flex: none; }
.fcolor { font-size: 18px; position: relative; padding-bottom: 6px; color: #444; }
.fcolor::after { content: ""; position: absolute; left: 6px; bottom: 5px; width: 20px; height: 5px; background: red; }
.ln { width: 18px; height: 22px; fill: none; stroke: #555; stroke-width: 1.5; }
.ln .bl { stroke: #1e88d2; }
.on { background: #ececec; }
.line .on { border: 1px solid #777; border-radius: 5px; width: 30px; margin: 0 1px; }
.g-align .vs { margin: 0 2px 0 1px; }
.g-align .tall { height: 78px; margin: 9px 15px 0 5px; }
.line.txt { gap: 5px; justify-content: flex-start; }
.txt .wide { margin-left: 11px; }
.ab { font: 11px "Open Sans", sans-serif; fill: #444; }
.dec { font: 10px "Open Sans", sans-serif; fill: #444; }
.sym { font-size: 22px; font-weight: 300; color: #333; }
.gallery { height: 78px; margin-top: 10px; width: 552px; border: 1px solid #c8c8c8; border-radius: 6px; display: flex; overflow: hidden; }
.cells { flex: 1; display: grid; grid-template-columns: repeat(4, 125px); grid-auto-rows: 28px; gap: 8px; padding: 6px 4px; font-size: 16px; }
.cells button { justify-content: flex-start; padding-left: 5px; }
.st-normal { color: #000; outline: 1px solid #666; outline-offset: 3px; box-shadow: 0 0 0 3px #ececec; }
.st-bad { background: #ffc7ce; color: #9c0006; } .st-good { background: #c6efce; color: #006100; } .st-neutral { background: #ffeb9c; color: #9c5700; }
.cells .st-calc { background: #f2f2f2; color: #fa7d00; font-weight: 700; border: 1px solid #7f7f7f; font-size: 14px; }
.cells .st-check { background: #a5a5a5; color: #fff; font-weight: 700; border: 3px double #3f3f3f; font-size: 14px; padding-left: 2px; }
.st-expl { color: #7f7f7f; font-style: italic; } .cells .st-link { color: #954f72; text-decoration: underline; }
.gscroll { width: 18px; display: grid; grid-template-rows: 25px 24px 1fr; border-left: 1px solid #c8c8c8; }
.gscroll button + button { border-top: 1px solid #c8c8c8; }
.dim { color: #999; } .flip { transform: rotate(180deg); }
.g-cells .body { padding-left: 7px; }
.g-edit .stack { margin-left: 15px; width: 115px; }
.g-edit .stack .wide { margin-left: 12px; }
.collapse { margin: auto 11px 10px auto; }

/* formula bar */
.formula { flex: none; margin: 10px 10px 8px; height: 30px; display: flex; align-items: center; gap: 5px; }
.formula > svg { margin: 0 5px; }
.formula > div { height: 30px; background: #fff; border: 1px solid #cfcfcf; border-radius: 5px; display: flex; align-items: center; }
.namebox { width: 128px; padding: 0 6px; font-size: 15px; }
.namebox input { width: 100px; }
.fx { width: 92px; justify-content: space-evenly; }
.fx svg { fill: none; stroke: #b0b0b0; stroke-width: 1.4; }
.fn { font: italic 22px/22px "Liberation Serif", serif; color: #222; }
.fbox { flex: 1; padding: 0 5px 0 10px; }
.fbox input { flex: 1; }

/* worksheet */
.sheet { flex: 1; min-height: 0; display: flex; background: #fff; }
.grid { flex: 1; min-width: 0; display: flex; flex-direction: column; border-right: 1px solid #dcdcdc; }
.colheads { flex: none; height: 23px; display: flex; background: #efefef; border-bottom: 1px solid #a6a6a6; overflow: hidden; color: #444; font-size: 14px; line-height: 21px; }
.colheads span { flex: none; width: 72px; text-align: center; border-right: 1px solid #d4d4d4; }
.colheads .corner { width: 34px; position: relative; background: linear-gradient(to bottom right, transparent 55%, #dcdcdc 55%) 15px 3px / 16px 17px no-repeat; }
.area { flex: 1; min-height: 0; display: flex; overflow: hidden; }
.rowheads { flex: none; width: 34px; background: #efefef; border-right: 1px solid #a6a6a6; color: #444; font-size: 14px; line-height: 22px; text-align: center; }
.rowheads span { display: block; height: 22px; border-bottom: 1px solid #d9d9d9; }
.canvas { flex: 1; min-width: 0; overflow: hidden; }
.charts { width: 1518px; display: grid; grid-template-columns: 758px 760px; grid-template-rows: 446px 446px 200px; }
figure { margin: 0; background: #f2f2f2; border: 0 solid #000; }
figure svg { display: block; overflow: hidden; }
.c1 { border-width: 0 0 2px 1px; margin: 0 -1px 0 2px; }
.c2 { border-width: 0 1px 1px; margin-left: 1px; }
.c3 { border-width: 0 2px 2px 0; }
.c4 { border-width: 0 1px 1px 0; }
.c5 { border-width: 0 1px 0 0; } .c6 { border-width: 0 1px 0 0; }
.chart-title { font: 27px Lato, sans-serif; fill: #595959; text-anchor: middle; }
.chart-label { font: 12px Lato, sans-serif; fill: #595959; }
.chart-label.key { font-size: 13px; }
.chart-label.end { text-anchor: end; }
.gridline { stroke: #d9d9d9; stroke-width: 1; }
.trend { fill: none; stroke: #4472c4; stroke-width: 4; stroke-linecap: round; stroke-linejoin: round; }
.vscroll { width: 25px; background: #f3f3f3; display: flex; flex-direction: column; align-items: center; padding: 5px 0 3px; }
.vthumb { width: 11px; height: 459px; border-radius: 6px; background: #666; margin: 7px 0 auto; }

/* sheet tabs */
.sheetbar { flex: none; height: 40px; border-top: 1px solid #dcdcdc; border-bottom: 2px solid #fff; display: flex; align-items: flex-start; padding: 0 24px 0 32px; font-size: 16px; color: #000; }
.sheetbar svg { fill: none; stroke: #333; stroke-width: 1.4; }
.sheetbar .dot { fill: #444; stroke: none; }
.arrows { display: flex; align-items: center; gap: 32px; height: 34px; }
.arrows button:last-child { margin-left: -5px; }
.tabs { display: flex; margin-left: 17px; }
.tabs li { display: flex; padding-top: 4px; }
.tabs li::after { content: ""; width: 1px; height: 24px; background: #c8c8c8; margin: 3px 5px 0; }
.tabs button { height: 30px; border-radius: 5px; padding: 0 12px 0 13px; }
.t-y { background: #ffffcc; } .t-w { background: #fff; } .t-g { background: #808080; color: #fff; } .t-p { background: #7030a0; color: #fff; }
.tabs .t-g, .tabs .t-w { padding: 0 13px; }
.t-a { background: linear-gradient(#fff, #c9abdd); outline: 2px solid #fff; color: #222; }
.tabs .t-a { padding: 0 10px; font-weight: 700; font-size: 15px; align-items: flex-start; }
.t-a span { border-bottom: 3px solid #107c41; line-height: 24px; }
.tabtools { display: flex; align-items: center; gap: 34px; height: 34px; margin-left: 11px; }
.tabtools button:first-child { margin-right: -8px; }
.hscroll { margin: 3px 0 0 auto; width: 132px; height: 30px; border-radius: 8px; background: #f5f5f5; display: flex; align-items: center; justify-content: center; gap: 7px; }
.hscroll span { width: 88px; height: 11px; border-radius: 6px; background: #666; }
.hscroll svg { stroke: none; }

/* status bar */
.status { flex: none; height: 27px; background: #f4f4f4; display: flex; align-items: center; padding: 0 18px 0 9px; font-size: 12px; color: #333; }
.status > svg { margin: 0 22px 0 26px; }
.access { gap: 5px; }
.views { margin-left: auto; display: flex; align-self: stretch; }
.views button { width: 50px; }
.views .on { background: #dedede; }
.views svg, .zoom svg { fill: none; stroke: #444; stroke-width: 1.3; }
.zoom { display: flex; align-items: center; gap: 6px; margin-left: 7px; }
.zoom input { appearance: none; width: 125px; height: 16px; background: linear-gradient(#777, #777) center / 100% 1px no-repeat; }
.zoom input::-webkit-slider-thumb { appearance: none; width: 6px; height: 14px; background: #666; }
.pct { margin-left: 16px; }

/* taskbar */
.taskbar { flex: none; height: 50px; background: #d2e0ea; display: flex; align-items: center; color: #111; }
.start { width: 60px; height: 50px; }
.tsearch { width: 360px; height: 50px; background: #fff; border: 1px solid #bcc5cc; display: flex; align-items: center; padding-left: 14px; gap: 14px; font-size: 18px; position: relative; overflow: hidden; }
.tsearch > svg:first-child { fill: none; stroke: #222; stroke-width: 1.4; }
.tsearch input { width: 200px; }
.tsearch input::placeholder { color: #333; opacity: 1; }
.singer { position: absolute; right: 0; bottom: 0; }
.apps { display: flex; }
.apps li { width: 62px; height: 50px; display: flex; flex-direction: column; align-items: center; }
.apps li button { flex: 1; width: 62px; }
.apps .run::after { content: ""; width: 51px; height: 3px; background: #0078d7; }
.apps .run button { padding-top: 3px; }
.tray { margin-left: auto; display: flex; align-items: center; padding-right: 20px; }
.tray svg { fill: none; stroke: #111; stroke-width: 1.2; }
.tray > button + button { margin-left: 11px; }
.tray > .weather + button { margin-left: 32px; }
.weather { font-size: 17px; gap: 12px; }
.sun { width: 26px; height: 26px; border-radius: 13px; background: linear-gradient(150deg, #f7b52c, #f4660c); }
.clock { width: 80px; margin-left: 7px; display: flex; flex-direction: column; align-items: center; line-height: 23px; }
.tray .notif { position: relative; margin-left: 17px; height: 30px; width: 30px; align-items: flex-start; justify-content: flex-start; }
.notif span { position: absolute; right: 0; bottom: -4px; width: 19px; height: 19px; border-radius: 10px; background: #d6d6d6; border: 1px solid #888; font-size: 13px; line-height: 17px; }
```
FILE: app.js
```js
const years = ['FY 2024', 'FY 2025', 'FY 2026', 'FY 2027', 'FY 2028', 'FY 2029', 'FY 2030', 'FY 2031', 'FY 2032', 'FY 2033'];

// column and row headings
const cols = document.getElementById('cols');
for (let i = 0; i < 35; i++) {
  const s = document.createElement('span');
  s.textContent = (i > 25 ? 'A' : '') + String.fromCharCode(65 + i % 26);
  cols.append(s);
}
const rows = document.getElementById('rows');
for (let i = 1; i <= 47; i++) {
  const s = document.createElement('span');
  s.textContent = i;
  rows.append(s);
}

// sheet tabs
const tabs = [['y', 'Revenue Assumptions'], ['y', 'Variable Costs'], ['y', 'Energy Costs'], ['w', 'M1'], ['w', 'M2'], ['w', 'Purchases'], ['y', 'Running Costs'], ['y', 'Cap Table'], ['y', 'Cap Ex'], ['y', 'Terminal Value'], ['y', 'Startup Costs'], ['y', 'Debt Schedule'], ['g', 'IS- M'], ['g', 'IS- A'], ['g', 'BS- M'], ['g', 'BS- A'], ['g', 'CF- M'], ['g', 'CF- A'], ['a', 'Visuals'], ['p', 'Distributions']];
document.getElementById('tabs').innerHTML = tabs.map(([k, t]) => `<li><button class="t-${k}"><span>${t}</span></button></li>`).join('');

// charts
const label = (x, y, t, cls = 'key') => `<text class="chart-label ${cls}" x="${x}" y="${y}">${t}</text>`;
const rect = (x, y, w, h, c) => `<rect x="${x}" y="${y}" width="${w}" height="${h}" fill="${c}"/>`;

function frame(c) {
  let s = `<text class="chart-title" x="${c.titleX}" y="${c.titleY}">${c.title}</text>`;
  c.ticks.forEach((t, i) => {
    const y = Math.round(c.top + i * c.step) + 0.5;
    s += `<line class="gridline" x1="${c.left}" x2="${c.right}" y1="${y}" y2="${y}"/>` + label(c.axisX, y + 4, t, 'end');
  });
  return s;
}
function categories(c) {
  const w = (c.right - c.left) / 10;
  return years.map((t, i) => {
    const x = c.left + w * (i + 0.5) + 3, y = c.base + 20;
    return `<text class="chart-label end" x="${x}" y="${y}" transform="rotate(-31 ${x} ${y})">${t}</text>`;
  }).join('');
}
function sideLegend(x, y) {
  return names.map((n, i) => rect(x, y + i * 25.3 - 4, 8, 8, palette[19 - i]) + label(x + 13, y + i * 25.3 + 4, n)).join('');
}
function stacked(c, data) {
  const w = (c.right - c.left) / 10;
  let s = '';
  data.forEach((col, i) => {
    let sum = 0;
    col.forEach((v, k) => {
      const y0 = Math.round(c.base - sum * c.unit);
      sum += v;
      const y1 = Math.round(c.base - sum * c.unit);
      s += rect(Math.round(c.left + w * (i + 0.5) - c.bar / 2), y1, c.bar, y0 - y1, c.colors[k]);
    });
  });
  return s;
}
function draw(id, x, y, w, h, body) {
  document.getElementById(id).innerHTML = `<svg width="${w}" height="${h}" viewBox="${x} ${y} ${w} ${h}">${body}</svg>`;
}

const palette = ['#4472c4', '#ed7d31', '#a5a5a5', '#ffc000', '#5b9bd5', '#70ad47', '#264478', '#9e480e', '#636363', '#997300', '#255e91', '#43682b', '#698ed0', '#f1975a', '#b7b7b7', '#ffcd33', '#7cafdd', '#8cc168', '#335aa1', '#d26012'];
const names = ['Other Items', 'Other Items', 'Other Items', 'Other Items', 'Other Items', 'Other Items', 'Radish', 'Beet Greens', 'Arugula', 'Spinach', 'Kale', 'Basil', 'Mint', 'Cilantro'];
const millions = ['$3,000,000', '$2,500,000', '$2,000,000', '$1,500,000', '$1,000,000', '$500,000', '-'];

// ten-year financial analysis, thousands of dollars
const fin = { title: '10-Year Financial Analysis', titleX: 416, titleY: 334, ticks: millions, top: 394, step: 48.33, left: 125.5, right: 777.5, axisX: 111, base: 684 };
const finSeries = [
  ['#a9d18e', [170, 1600, 2420, 2470, 2520, 2570, 2625, 2675, 2730, 2780]],
  ['#9dc3e6', [88, 1390, 2160, 2210, 2255, 2305, 2345, 2398, 2450, 2500]],
  ['#385723', [55, 1350, 2115, 2167, 2209, 2250, 2302, 2354, 2405, 2457]]];
let bars = '';
finSeries.forEach(([color, vals], k) => vals.forEach((v, i) => {
  const h = Math.round(v * 290 / 3000);
  bars += rect(Math.round(fin.left + 65.2 * i + 13) + 13 * k, fin.base - h, 13, h, color);
}));
draw('chart-financial', 37, 295, 755, 444, frame(fin) + bars + categories(fin) +
  rect(294, 362, 8, 8, '#a9d18e') + label(305, 370, 'Total Revenue') +
  rect(399, 362, 8, 8, '#9dc3e6') + label(410, 370, 'Gross Profit') +
  rect(490, 362, 8, 8, '#385723') + label(501, 370, 'EBITDA'));

// units sold, thousands
const units = { title: 'Annual Units Sold by Crop Type', titleX: 1172, titleY: 334, ticks: ['200,000', '180,000', '160,000', '140,000', '120,000', '100,000', '80,000', '60,000', '40,000', '20,000', '-'], top: 360, step: 32.5, left: 865.5, right: 1425.5, axisX: 850, base: 685, unit: 1.625, bar: 23, colors: palette };
const steady = [7.6, 1.8, 2.5, 7.4, 5.1, .6, 2.3, 4.7, 6.2, 8, 9.2, 10.7, 11.7, 13.5, 13.5, 12.9, 13.5, 13.5, 12.9, 13.5];
draw('chart-units', 794, 295, 757, 445, frame(units) + stacked(units, [
  [5.7, 1.2, 1.8, 4.3, 2.5, 0, 1.2, 1.4, 1.6, 2.1, .6, 1.2],
  [6.8, .6, 2.7, 6.2, 4.9, .6, 1.8, 4.3, 5.5, 7.4, 8, 9.2, 10.5, 11.1, 9.8, 8.6, 8, 7.4, 5.5, 4.9],
  steady,
  [8.2, 1.8, 1.8, 8, 4.7, .8, 2.5, 4.9, 6.2, 7.2, 9.2, 10.7, 12.3, 13.5, 12.9, 13.5, 13.5, 12.9, 13.5, 13.5],
  steady, steady, steady, steady, steady, steady]) + categories(units) + sideLegend(1449, 377));

// expense summary, thousands of dollars
const exp = { title: '10-Year Expense Summary', titleX: 413, titleY: 781, ticks: ['$350,000', '$300,000', '$250,000', '$200,000', '$150,000', '$100,000', '$50,000', '-'], top: 841, step: 41.3, left: 112.5, right: 774.5, axisX: 97, base: 1130, unit: 289 / 350, bar: 48, colors: ['#548235', '#a9d18e'] };
draw('chart-expense', 34, 741, 756, 444, frame(exp) + stacked(exp, [[80.3, 36.4], [206.3, 37.5], [262, 37.5], [265.6, 37.6], [266.8, 42.4], [269.3, 44.7], [272.9, 43.6], [275.3, 43.7], [277.7, 43.6], [281.4, 43.6]]) + categories(exp) +
  rect(242, 808, 8, 8, '#548235') + label(252, 816, 'Variable Costs - Excludes Growing Materials Cost') +
  rect(546, 808, 8, 8, '#a9d18e') + label(556, 816, 'SG&amp;A'));

// revenue by crop: 2026 onward grows about two percent a year
const rev = { title: 'Annual Revenue by Crop Type', titleX: 1171, titleY: 781, ticks: millions, top: 806, step: 54.16, left: 881.5, right: 1424.5, axisX: 867, base: 1131, unit: 325 / 3000, bar: 22, colors: palette };
const rev2026 = [49, 9, 9, 65, 37, 3, 18, 34, 68, 74, 111, 129, 166, 191, 206, 222, 240, 249, 268, 277];
const growth = [1, 1.02, 1.04, 1.06, 1.08, 1.103, 1.126, 1.149];
draw('chart-revenue', 792, 741, 759, 445, frame(rev) + stacked(rev, [
  [31, 9, 9, 37, 9, 9, 0, 21, 6, 18, 9, 7],
  [40, 9, 9, 55, 25, 3, 22, 34, 43, 77, 89, 111, 142, 157, 157, 138, 138, 129, 120, 92],
  ...growth.map(g => rev2026.map(v => v * g))]) + categories(rev) + sideLegend(1448, 824));

// cash flow
draw('chart-monthly', 34, 1187, 757, 200, frame({ title: 'Monthly Cash Flow', titleX: 413, titleY: 1227, ticks: ['$2,500,000', '$2,000,000'], top: 1252, step: 48, left: 128, right: 763, axisX: 113 }) +
  '<path class="trend" d="M761 1292L759 1330"/>');
draw('chart-cumulative', 792, 1187, 759, 200, frame({ title: 'Cumulative Cash Flow', titleX: 1171, titleY: 1226, ticks: ['$18,000,000', '$16,000,000', '$14,000,000'], top: 1252, step: 33, left: 888.5, right: 1521.5, axisX: 874 }) +
  '<path class="trend" d="M1480 1331L1496 1323 1515 1315 1520 1279"/>');
```
